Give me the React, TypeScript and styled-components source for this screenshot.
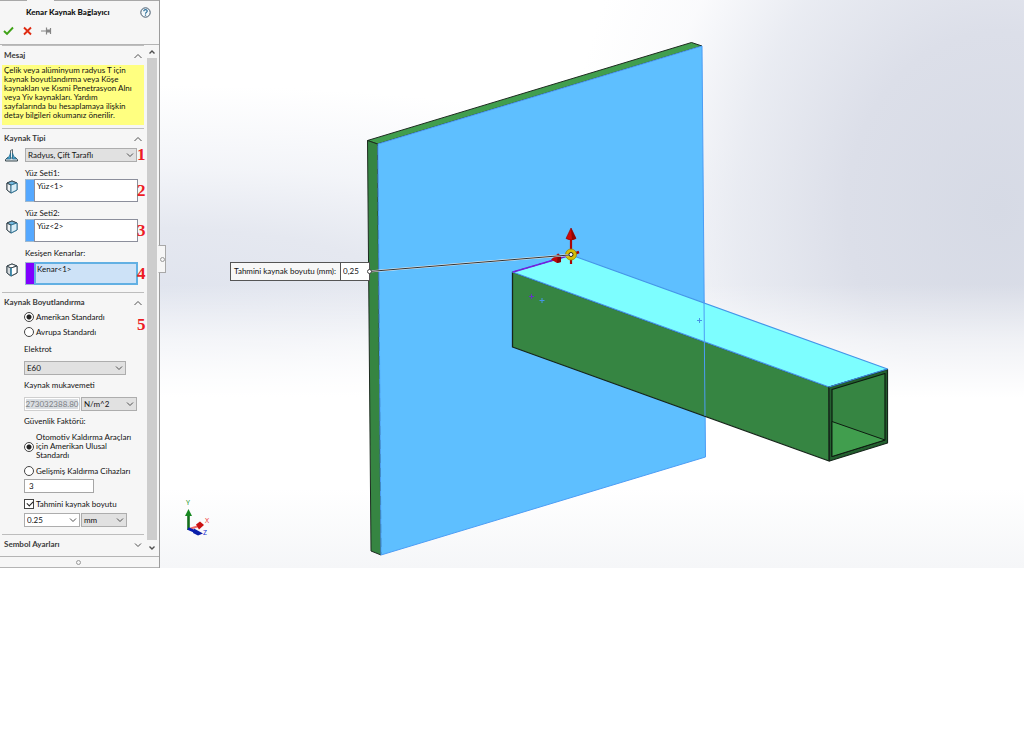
import React, { useState } from 'react';
import styled, { createGlobalStyle, css } from 'styled-components';

const GlobalStyle = createGlobalStyle`
  * { box-sizing: border-box; }
  body { margin: 0; background: #fff; }
  body, button, input, select, textarea {
    font-family: Lato, "Noto Sans", sans-serif;
    font-size: 8px;
    line-height: 9px;
    color: #111;
  }
`;

const Workspace = styled.main`
  display: flex;
  align-items: stretch;
`;

const Panel = styled.aside`
  position: relative;
  flex: none;
  width: 160px;
  display: flex;
  flex-direction: column;
  background: #f6f6f6;
  border-right: 1px solid #9c9c9c;
`;

const PanelHeader = styled.header`
  height: 45px;
  border-bottom: 1px solid #b4b4b4;
`;

const TabEdge = styled.div`
  display: flex;
  justify-content: space-between;
  &::before, &::after { content: ""; height: 1px; background: #a8a8a8; }
  &::before { width: 27px; }
  &::after { width: 105px; }
`;

const TitleRow = styled.div`
  display: flex;
  align-items: center;
  height: 22px;
  padding: 0 8px 0 26px;
`;

const PanelTitle = styled.h1`
  flex: 1;
  margin: 0;
  font-size: 8px;
  font-weight: 900;
  white-space: nowrap;
`;

const IconButton = styled.button`
  display: flex;
  align-items: center;
  justify-content: center;
  padding: 0;
  border: 0;
  background: none;
  svg { display: block; }
`;

const Toolbar = styled.div`
  display: flex;
  align-items: center;
  gap: 8px;
  height: 16px;
  padding-left: 3px;
`;

const PanelBody = styled.div`
  display: flex;
`;

const Sections = styled.div`
  flex: 1;
  min-width: 0;
  padding-bottom: 4px;
`;

const SectionBox = styled.section`
  &::before {
    content: "";
    display: block;
    height: 1px;
    margin: 0 3px 0 2px;
    background: #bdbdbd;
  }
`;

const SectionHeader = styled.div`
  display: flex;
  align-items: center;
  justify-content: space-between;
  height: 17px;
  padding: 2px 5px 0 4px;
`;

const SectionTitle = styled.h2`
  margin: 0;
  font-size: 8px;
  font-weight: 700;
  color: #3a3a3a;
`;

const Message = styled.p`
  margin: 2px 3px 3px 2px;
  height: 60px;
  padding: 1px 2px;
  background: #ffff80;
  white-space: pre;
`;

const FieldRow = styled.div<{ $top?: number }>`
  display: grid;
  grid-template-columns: 25px minmax(0, 1fr) 10px;
  align-items: center;
  margin-top: ${(p) => p.$top ?? 0}px;
`;

const FieldSet = styled.div`
  padding-bottom: 7px;
`;

const RowIcon = styled.span`
  display: flex;
  align-self: start;
  padding: 1px 0 0 5px;
`;

const Marker = styled.b`
  width: 10px;
  height: 14px;
  font-family: "Liberation Serif", serif;
  font-size: 17px;
  line-height: 14px;
  color: #ed1c24;
`;

const FieldLabel = styled.label<{ $tall?: boolean }>`
  display: block;
  height: ${(p) => (p.$tall ? 14 : 11)}px;
  padding-top: 1px;
  margin: 6px 0 0 25px;
`;

const GroupLabel = styled.label`
  display: block;
  height: 11px;
  padding-top: 1px;
  margin: 5px 0 6px;
`;

const Picker = styled.div<{ $color: string; $active?: boolean }>`
  display: flex;
  height: 23px;
  margin-right: -1px;
  &::before {
    content: "";
    width: 8px;
    background: ${(p) => p.$color};
    border: 1px solid #9db8d0;
    border-right: 0;
  }
`;

const PickerList = styled.textarea<{ $active?: boolean }>`
  flex: 1;
  min-width: 0;
  height: 23px;
  padding: 2px;
  border: 1px solid #8c8f9c;
  background: #fff;
  resize: none;
  overflow: hidden;
  outline: 0;
  border-radius: 0;
  ${(p) =>
    p.$active &&
    css`
      padding: 1px;
      border: 2px solid #62b0e3;
      background: #cde2f7;
    `}
`;

const SelectWrap = styled.span<{ $width?: string }>`
  position: relative;
  display: block;
  width: ${(p) => p.$width ?? '100%'};
  svg {
    position: absolute;
    right: 3px;
    top: 4px;
    pointer-events: none;
  }
`;

const StyledSelect = styled.select<{ $light?: boolean }>`
  appearance: none;
  display: block;
  width: 100%;
  height: 14px;
  padding: 0 10px 0 2px;
  border: 1px solid #adadad;
  border-radius: 0;
  background: ${(p) => (p.$light ? '#fff' : '#e1e1e1')};
`;

const SettingsBody = styled.div`
  padding: 0 10px 7px 24px;
`;

const ChoiceBlock = styled.div`
  display: flex;
  align-items: center;
  justify-content: space-between;
  margin-right: -10px;
`;

const ChoiceList = styled.div`
  display: flex;
  flex-direction: column;
  gap: 1px;
`;

const Choice = styled.label`
  display: flex;
  align-items: center;
  gap: 2px;
  min-height: 14px;
  white-space: pre;
`;

const Radio = styled.input.attrs({ type: 'radio' })`
  appearance: none;
  flex: none;
  width: 10px;
  height: 10px;
  margin: 0;
  border: 1px solid #444;
  border-radius: 50%;
  background: #fff;
  &:checked { background: radial-gradient(circle, #222 0 2px, #fff 3px); }
`;

const CheckBox = styled.input.attrs({ type: 'checkbox' })`
  appearance: none;
  flex: none;
  position: relative;
  width: 10px;
  height: 10px;
  margin: 0;
  border: 1px solid #444;
  background: #fff;
  &:checked::after {
    content: "";
    position: absolute;
    left: 2px;
    top: 1px;
    width: 5px;
    height: 3px;
    border: solid #222;
    border-width: 0 0 1px 1px;
    transform: rotate(-45deg);
  }
`;

const InputRow = styled.div`
  display: flex;
  gap: 1px;
`;

const TextInput = styled.input<{ $width: number }>`
  width: ${(p) => p.$width}px;
  height: 14px;
  padding: 0 4px;
  border: 1px solid #a6a6a6;
  border-radius: 0;
  background: #fff;
  &:disabled {
    padding: 0;
    text-align: center;
    border-color: #cfcfcf;
    color: #7c8084;
    background: #d9dde1;
    box-shadow: inset 0 0 0 1px #fff;
  }
`;

const SafetyBlock = styled.div`
  display: flex;
  flex-direction: column;
  gap: 4px;
`;

const SizeBlock = styled.div`
  display: flex;
  flex-direction: column;
  gap: 2px;
`;

const ScrollBar = styled.div`
  display: flex;
  flex-direction: column;
  align-items: center;
  width: 12px;
  padding: 4px 2px 5px 0;
`;

const ScrollThumb = styled.div`
  flex: 1;
  width: 10px;
  margin: 3px 0 5px;
  background: #cdcdcd;
`;

const PanelFooter = styled.footer`
  display: flex;
  align-items: center;
  justify-content: center;
  height: 12px;
  padding-right: 3px;
  border: solid #b4b4b4;
  border-width: 1px 0;
`;

const Grip = styled.i`
  width: 5px;
  height: 5px;
  border: 1px solid #999;
  border-radius: 50%;
`;

const Splitter = styled.button`
  position: absolute;
  z-index: 2;
  left: 158px;
  top: 245px;
  display: flex;
  align-items: center;
  justify-content: center;
  width: 8px;
  height: 28px;
  padding: 0;
  border: 1px solid #a8a8a8;
  border-left-color: #f6f6f6;
  background: #f6f6f6;
`;

const Viewport = styled.section`
  position: relative;
  flex: 1;
  min-width: 0;
  overflow: hidden;
  background:
    linear-gradient(to bottom, rgba(255,255,255,0) 50%, rgba(255,255,255,0.6) 60%, #fff 70%, #fff 86%, #f5f6f8 100%),
    radial-gradient(ellipse 50% 90% at 97% 37%, #d6dae5 0%, #dcdfe9 35%, rgba(228,231,239,0.8) 60%, rgba(244,245,249,0.45) 80%, rgba(255,255,255,0) 100%),
    radial-gradient(ellipse 90% 36% at 0% 51%, #e0e4ee 0%, #e5e8f0 30%, rgba(240,242,247,0.8) 60%, rgba(255,255,255,0) 100%),
    #fff;
`;

const Scene = styled.svg`
  position: absolute;
  inset: 0;
  width: 100%;
  height: 100%;
`;

const Callout = styled.label`
  position: absolute;
  left: 8%;
  top: 46%;
  display: flex;
  align-items: stretch;
  width: 140px;
  height: 19px;
  margin: 1px 0 0 1px;
  border: 1px solid #555;
  background: #f7f7f7;
  white-space: nowrap;
`;

const CalloutText = styled.span`
  flex: 1;
  padding-left: 3px;
  line-height: 17px;
`;

const CalloutInput = styled.input`
  width: 29px;
  padding: 0 2px;
  border: 0;
  border-left: 1px solid #555;
  border-radius: 0;
  background: #fff;
`;

const Anchor = styled.i`
  position: absolute;
  right: -3px;
  top: 6px;
  width: 5px;
  height: 5px;
  border: 1px solid #444;
  border-radius: 50%;
  background: #fff;
`;

const Chevron = ({ up = false, bold = false }: { up?: boolean; bold?: boolean }) => (
  <svg width="8" height="6" viewBox="0 0 8 6" fill="none" stroke="#505050" strokeWidth={bold ? 1.4 : 1}>
    {bold ? (
      <path d={up ? 'M1.500 4.500 4 2 6.500 4.500' : 'M1.500 1.500 4 4 6.500 1.500'} />
    ) : (
      <path d={up ? 'M.5 5 4 1.500 7.500 5' : 'M1 1.500 4 4.500 7 1.500'} />
    )}
  </svg>
);

const FaceIcon = ({ edge = false }: { edge?: boolean }) => (
  <svg width="14" height="14" viewBox="0 0 14 14" strokeLinejoin="round">
    <path d="M2 3 7 1 12 3V10L6 13 2 10Z" fill="#f4f6f7" stroke="#3c4a52" />
    <path d="M2 3 6 5V13L2 10Z" fill={edge ? '#d5dadd' : '#eef1f3'} stroke="#3c4a52" />
    <path d="M2 3 7 1 12 3 6 5Z" fill={edge ? '#fff' : '#73b9df'} stroke="#3c4a52" />
    <path d="M6 5 12 3V10L6 13Z" fill={edge ? '#fff' : '#d8edf6'} stroke={edge ? '#3c4a52' : '#347b9e'} />
    {edge && <path d="M6 5V13" stroke="#2f8eb5" strokeWidth="1.4" />}
  </svg>
);

const WeldIcon = () => (
  <svg width="13" height="13" viewBox="0 0 13 13">
    <path d="M2.500 8.500H10.500L12.500 10.500V12H.5V10.500Z" fill="#dce4e8" stroke="#39484f" />
    <path d="M5.500 1.500 7.500.5V9H5.500Z" fill="#edf1f3" stroke="#39484f" strokeWidth=".8" />
    <path d="M5.500 4V10H1.500C3.500 8.500 4.500 7 5.500 4ZM7.500 4V10H11.500C9.500 8.500 8.500 7 7.500 4Z" fill="#4ba3ce" stroke="#24688a" strokeWidth=".7" />
  </svg>
);

function Select({ id, value, width, light, label }: { id?: string; value: string; width?: string; light?: boolean; label?: string }) {
  return (
    <SelectWrap $width={width}>
      <StyledSelect id={id} aria-label={label} defaultValue={value} $light={light}>
        <option>{value}</option>
      </StyledSelect>
      <Chevron />
    </SelectWrap>
  );
}

function Section({ title, closed, children }: { title: string; closed?: boolean; children?: React.ReactNode }) {
  const [open, setOpen] = useState(!closed);
  return (
    <SectionBox>
      <SectionHeader>
        <SectionTitle>{title}</SectionTitle>
        <IconButton type="button" aria-label={title} aria-expanded={open} onClick={() => setOpen(!open)}>
          <Chevron up={open} />
        </IconButton>
      </SectionHeader>
      {open && children}
    </SectionBox>
  );
}

const pickers = [
  { id: 'face1', label: 'Yüz Seti1:', value: 'Yüz<1>', color: '#55a8ff', marker: '2' },
  { id: 'face2', label: 'Yüz Seti2:', value: 'Yüz<2>', color: '#55a8ff', marker: '3' },
  { id: 'edges', label: 'Kesişen Kenarlar:', value: 'Kenar<1>', color: '#8000ff', marker: '4', active: true },
];

const Model = () => (
  <Scene viewBox="160 0 864 568" preserveAspectRatio="xMinYMin meet" strokeLinejoin="round">
    <path d="M367.500 140.500 691.500 42.500 702 46 377.500 144Z" fill="#419e4e" stroke="#1d2b20" />
    <path d="M367.500 140.500 377.500 144 381 555 371 551Z" fill="#368542" stroke="#1d2b20" />
    <path d="M378 144 702 46 705.500 457 381 555Z" fill="#5ebfff" stroke="#4c9df5" />
    <path d="M377.500 146 381 554" stroke="#3c7fae" strokeDasharray="9 5" strokeWidth=".7" />
    <path d="M512.500 272 829 387V461L512.500 347Z" fill="#368542" stroke="#16251a" strokeWidth="1.300" />
    <path d="M512.500 272 571 255 887.500 369 829 387Z" fill="#7dfeff" stroke="#4595e8" strokeWidth="1.200" />
    <path d="M829 387 887.500 369.500V443L829.500 461Z" fill="#23602f" stroke="#15251a" strokeWidth="1.200" />
    <path d="M832 389.500 885 373.500V440L832 456.500Z" fill="#368542" stroke="#0d1b10" strokeWidth="1.200" />
    <path d="M832 421.500 885 440 832 456.500Z" fill="#419e4e" stroke="#0d1b10" />
    <path d="M829 387 887.500 369" stroke="#3c8ce0" strokeWidth="1.300" />
    <path d="M704 300 705 416" stroke="#4c9df5" />
    <path d="M513 272 571 255" stroke="#7d18ee" strokeWidth="1.800" />
    <path d="M515 271.400 571 255" stroke="#5c39b5" strokeDasharray="3 3" />
    <path d="M529 296.500H534M531.500 294V299" stroke="#6532c5" />
    <path d="M539.500 300.500H544.500M542 298V303M697 320.500H702M699.500 318V323" stroke="#4595e8" />

    <path d="M571 264V239" stroke="#a90707" strokeWidth="2.200" />
    <path d="M571 228 576 238.500Q571 241.500 566 238.500Z" fill="#ce0808" stroke="#8b0000" strokeWidth=".6" />
    <path d="M571 228 572 240 576 238.500Z" fill="#8f0505" />
    <path d="M571 255 579 252" stroke="#a90707" strokeWidth="2.500" />
    <path d="M551 259.500 558 253.500 561 256V262L557 263Z" fill="#bc0707" />
    <path d="M558 253.500 561 256V262L557 263Z" fill="#850404" />
    <circle cx="571" cy="254.500" r="5.500" fill="#d4bd06" stroke="#948300" strokeWidth=".7" />
    <path d="M369 271.500 569 255" stroke="#eee" strokeWidth="2" />
    <path d="M369 271.500 569 255" stroke="#333" />
    <circle cx="571" cy="254.500" r="2" fill="#fff" stroke="#222" />

    <path d="M188.500 530V514" stroke="#146d1c" strokeWidth="2.600" />
    <path d="M188.500 509 192 516H185Z" fill="#168820" />
    <path d="M189 529 199 526" stroke="#f06b6b" strokeWidth="2" />
    <path d="M196 524.500 200 521.500 204 525 199 529.500Z" fill="#ca1111" />
    <path d="M188 528.500 196 532" stroke="#071bb0" strokeWidth="3" />
    <path d="M194 528.500 203 533.500 198 535.500 193 533Z" fill="#0a1faa" />
    <g fontFamily="Noto Sans, sans-serif" fontSize="7">
      <text x="186" y="505" fill="#23962d">Y</text>
      <text x="205" y="523" fill="#ee3030">X</text>
      <text x="203" y="535" fill="#1931d0">Z</text>
    </g>
  </Scene>
);

export default function App() {
  return (
    <>
      <GlobalStyle />
      <Workspace>
        <Panel>
          <PanelHeader>
            <TabEdge />
            <TitleRow>
              <PanelTitle>Kenar Kaynak Bağlayıcı</PanelTitle>
              <IconButton type="button" aria-label="Yardım">
                <svg width="11" height="11" viewBox="0 0 11 11" fill="none">
                  <circle cx="5.500" cy="5.500" r="4.700" fill="#f5f9fb" stroke="#40566a" />
                  <path d="M3.800 4.300C3.800 2 7.300 2.200 7.200 4.200 7.200 5.300 5.500 5.300 5.500 6.700M5.500 7.600V8.800" stroke="#2c6f9b" strokeWidth="1.200" />
                </svg>
              </IconButton>
            </TitleRow>
            <Toolbar>
              <IconButton type="button" aria-label="Tamam">
                <svg width="11" height="10" viewBox="0 0 11 10" fill="none"><path d="M1 5 4 8 10 1.500" stroke="#3fa216" strokeWidth="1.900" /></svg>
              </IconButton>
              <IconButton type="button" aria-label="İptal">
                <svg width="11" height="10" viewBox="0 0 11 10" fill="none"><path d="M2 1.500 9 8.500M9 1.500 2 8.500" stroke="#df2b12" strokeWidth="1.900" /></svg>
              </IconButton>
              <IconButton type="button" aria-label="Sabitle">
                <svg width="11" height="10" viewBox="0 0 11 10" fill="none" stroke="#858585"><path d="M0 5H5M5.500 1.500V8.500M9.500 2V8" strokeWidth="1.200" /><path d="M6 5H9.500" strokeWidth="3" /></svg>
              </IconButton>
            </Toolbar>
          </PanelHeader>

          <PanelBody>
            <Sections>
              <Section title="Mesaj">
                <Message>{`Çelik veya alüminyum radyus T için
kaynak boyutlandırma veya Köşe
kaynakları ve Kısmi Penetrasyon Alnı
veya Yiv kaynakları. Yardım
sayfalarında bu hesaplamaya ilişkin
detay bilgileri okumanız önerilir.`}</Message>
              </Section>

              <Section title="Kaynak Tipi">
                <FieldSet>
                  <FieldRow $top={2}>
                    <RowIcon><WeldIcon /></RowIcon>
                    <Select label="Kaynak Tipi" value="Radyus, Çift Taraflı" />
                    <Marker>1</Marker>
                  </FieldRow>
                  {pickers.map((p) => (
                    <React.Fragment key={p.id}>
                      <FieldLabel htmlFor={p.id} $tall={p.active}>{p.label}</FieldLabel>
                      <FieldRow>
                        <RowIcon><FaceIcon edge={p.active} /></RowIcon>
                        <Picker $color={p.color}>
                          <PickerList id={p.id} $active={p.active} readOnly value={p.value} />
                        </Picker>
                        <Marker>{p.marker}</Marker>
                      </FieldRow>
                    </React.Fragment>
                  ))}
                </FieldSet>
              </Section>

              <Section title="Kaynak Boyutlandırma">
                <SettingsBody>
                  <ChoiceBlock>
                    <ChoiceList>
                      <Choice><Radio name="standard" defaultChecked />Amerikan Standardı</Choice>
                      <Choice><Radio name="standard" />Avrupa Standardı</Choice>
                    </ChoiceList>
                    <Marker>5</Marker>
                  </ChoiceBlock>
                  <GroupLabel htmlFor="electrode">Elektrot</GroupLabel>
                  <Select id="electrode" value="E60" width="102px" />
                  <GroupLabel htmlFor="strength">Kaynak mukavemeti</GroupLabel>
                  <InputRow>
                    <TextInput id="strength" $width={56} disabled defaultValue="273032388.80" />
                    <Select label="Mukavemet birimi" value="N/m^2" width="56px" />
                  </InputRow>
                  <GroupLabel htmlFor="safety">Güvenlik Faktörü:</GroupLabel>
                  <SafetyBlock>
                    <Choice><Radio name="factor" defaultChecked />{`Otomotiv Kaldırma Araçları
için Amerikan Ulusal
Standardı`}</Choice>
                    <ChoiceList>
                      <Choice><Radio name="factor" />Gelişmiş Kaldırma Cihazları</Choice>
                      <TextInput id="safety" $width={70} defaultValue="3" />
                    </ChoiceList>
                    <SizeBlock>
                      <Choice><CheckBox defaultChecked />Tahmini kaynak boyutu</Choice>
                      <InputRow>
                        <Select label="Kaynak boyutu" value="0.25" width="56px" light />
                        <Select label="Boyut birimi" value="mm" width="46px" />
                      </InputRow>
                    </SizeBlock>
                  </SafetyBlock>
                </SettingsBody>
              </Section>

              <Section title="Sembol Ayarları" closed />
            </Sections>
            <ScrollBar>
              <Chevron up bold />
              <ScrollThumb />
              <Chevron bold />
            </ScrollBar>
          </PanelBody>
          <PanelFooter><Grip /></PanelFooter>
          <Splitter type="button" aria-label="Paneli daralt"><Grip /></Splitter>
        </Panel>

        <Viewport>
          <Model />
          <Callout>
            <CalloutText>Tahmini kaynak boyutu (mm):</CalloutText>
            <CalloutInput defaultValue="0,25" />
            <Anchor />
          </Callout>
        </Viewport>
      </Workspace>
    </>
  );
}
